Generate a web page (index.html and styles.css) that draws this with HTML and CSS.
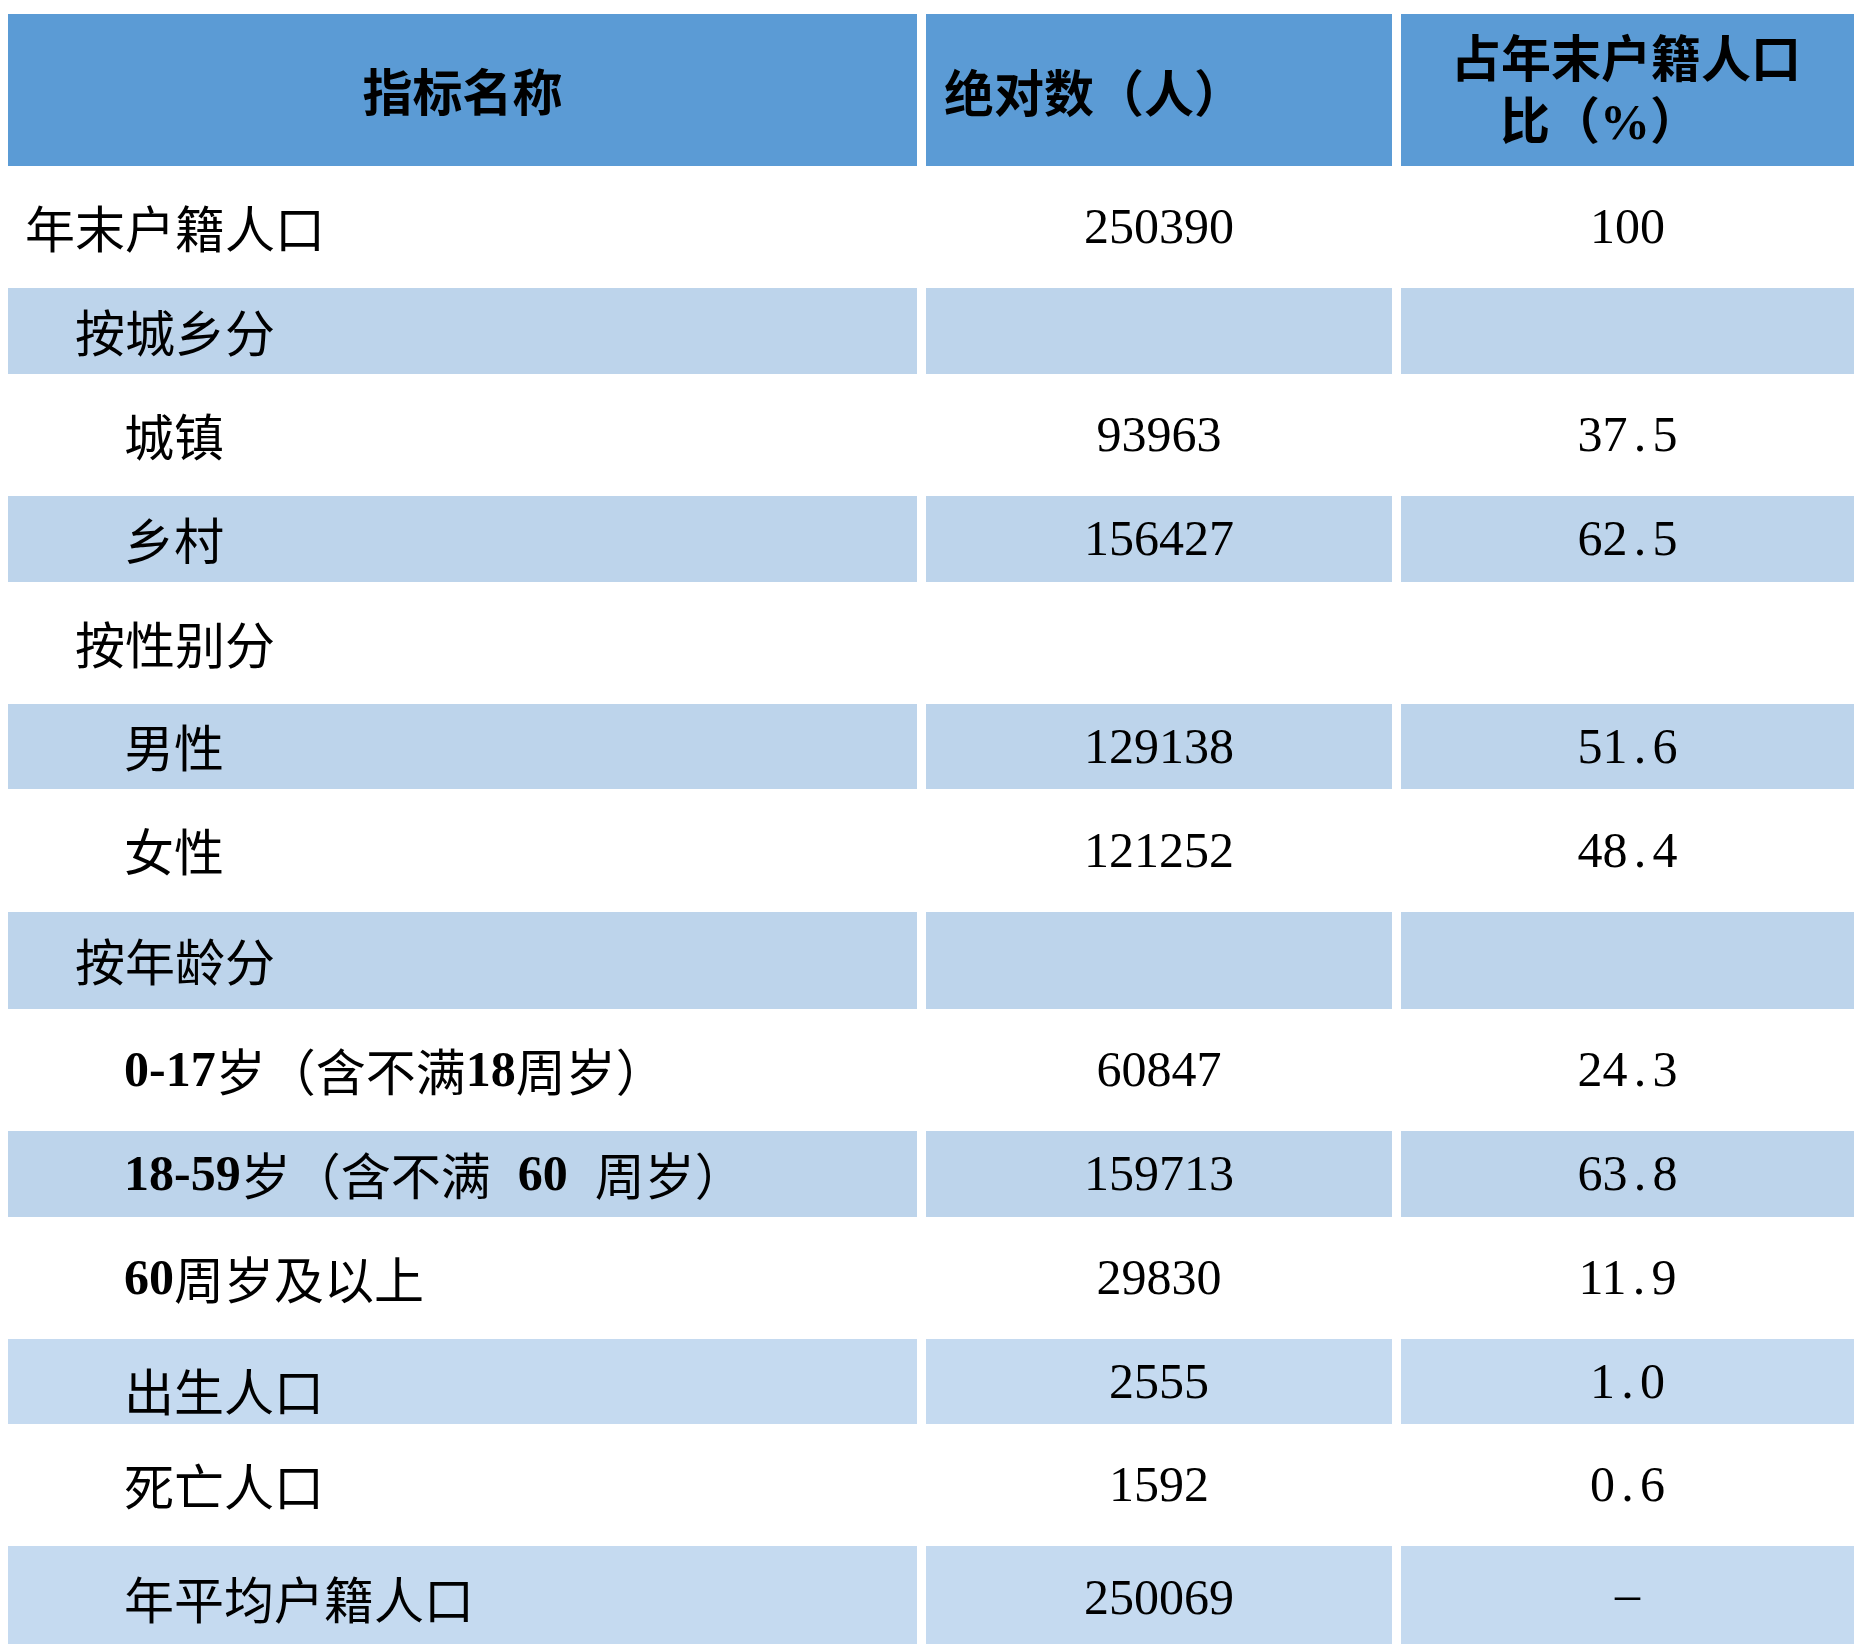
FILE: index.html
```html
<!DOCTYPE html>
<html lang="zh-CN">
<head>
<meta charset="utf-8">
<title>户籍人口</title>
<link rel="stylesheet" href="styles.css">
</head>
<body>
<div class="table">
  <div class="row head">
    <div class="cell name center">指标名称</div>
    <div class="cell abs">绝对数（人）</div>
    <div class="cell pct">
      <span class="l1">占年末户籍人口</span>
      <span class="l2">比（<span class="lat">%</span>）</span>
    </div>
  </div>

  <div class="row h122">
    <div class="cell name">年末户籍人口</div>
    <div class="cell num">250390</div>
    <div class="cell num">100</div>
  </div>

  <div class="row h86 alt">
    <div class="cell name ind1">按城乡分</div>
    <div class="cell num"></div>
    <div class="cell num"></div>
  </div>

  <div class="row h122">
    <div class="cell name ind2">城镇</div>
    <div class="cell num">93963</div>
    <div class="cell num">37<span class="dot">.</span>5</div>
  </div>

  <div class="row h86 alt">
    <div class="cell name ind2">乡村</div>
    <div class="cell num">156427</div>
    <div class="cell num">62<span class="dot">.</span>5</div>
  </div>

  <div class="row h122">
    <div class="cell name ind1">按性别分</div>
    <div class="cell num"></div>
    <div class="cell num"></div>
  </div>

  <div class="row h85 alt">
    <div class="cell name ind2">男性</div>
    <div class="cell num">129138</div>
    <div class="cell num">51<span class="dot">.</span>6</div>
  </div>

  <div class="row h123">
    <div class="cell name ind2">女性</div>
    <div class="cell num">121252</div>
    <div class="cell num">48<span class="dot">.</span>4</div>
  </div>

  <div class="row h97 alt">
    <div class="cell name ind1">按年龄分</div>
    <div class="cell num"></div>
    <div class="cell num"></div>
  </div>

  <div class="row h122">
    <div class="cell name ind2"><b class="lat">0-17</b>岁（含不满<b class="lat">18</b>周岁）</div>
    <div class="cell num">60847</div>
    <div class="cell num">24<span class="dot">.</span>3</div>
  </div>

  <div class="row h86 alt">
    <div class="cell name ind2"><b class="lat">18-59</b>岁（含不满<b class="lat spaced">60</b>周岁）</div>
    <div class="cell num">159713</div>
    <div class="cell num">63<span class="dot">.</span>8</div>
  </div>

  <div class="row h122">
    <div class="cell name ind2"><b class="lat">60</b>周岁及以上</div>
    <div class="cell num">29830</div>
    <div class="cell num">11<span class="dot">.</span>9</div>
  </div>

  <div class="row h85 alt2">
    <div class="cell name ind2 low">出生人口</div>
    <div class="cell num">2555</div>
    <div class="cell num">1<span class="dot">.</span>0</div>
  </div>

  <div class="row h122">
    <div class="cell name ind2">死亡人口</div>
    <div class="cell num">1592</div>
    <div class="cell num">0<span class="dot">.</span>6</div>
  </div>

  <div class="row h104 alt2">
    <div class="cell name ind2">年平均户籍人口</div>
    <div class="cell num">250069</div>
    <div class="cell num dash">–</div>
  </div>
</div>
</body>
</html>
```

FILE: styles.css
```css
html, body {
  margin: 0;
  padding: 0;
  background: #ffffff;
  overflow: hidden;
}

body {
  font-family: "Noto Sans CJK SC", "Noto Sans", sans-serif;
  color: #000000;
}

.table {
  padding: 14px 0 0 8px;
  display: flex;
  flex-direction: column;
}

.row {
  display: grid;
  grid-template-columns: 909px 466px 453px;
  column-gap: 9px;
}

.cell {
  display: flex;
  align-items: center;
  font-size: 50px;
  line-height: 1.2;
  white-space: nowrap;
  box-sizing: border-box;
}

.head {
  height: 152px;
}

.head .cell {
  background: #5b9bd5;
  font-weight: bold;
}

.h85 { height: 85px; }
.h86 { height: 86px; }
.h97 { height: 97px; }
.h104 { height: 104px; }
.h122 { height: 122px; }
.h123 { height: 123px; }

.alt .cell {
  background: #bdd4eb;
}

.alt2 .cell {
  background: #c5daf0;
}

.name {
  padding-left: 17px;
  padding-bottom: 3px;
}

.name.center {
  justify-content: center;
  padding-left: 0;
}

.ind1 {
  padding-left: 67px;
}

.ind2 {
  padding-left: 116px;
}

.low {
  padding-top: 14px;
  padding-bottom: 0;
}

.abs {
  padding-left: 18px;
}

.pct {
  flex-direction: column;
  align-items: flex-start;
  justify-content: center;
  padding-left: 50px;
  padding-bottom: 4px;
  line-height: 62px;
}

.pct .l2 {
  margin-left: 49px;
}

.num {
  justify-content: center;
  font-family: "Liberation Serif", "Noto Sans CJK SC", serif;
  font-weight: normal;
  padding-bottom: 2px;
}

.dash {
  padding-bottom: 8px;
}

.lat {
  font-family: "Liberation Serif", serif;
  font-weight: bold;
}

.spaced {
  margin: 0 27px;
}

.dot {
  display: inline-block;
  width: 0.5em;
  text-align: center;
}
```
